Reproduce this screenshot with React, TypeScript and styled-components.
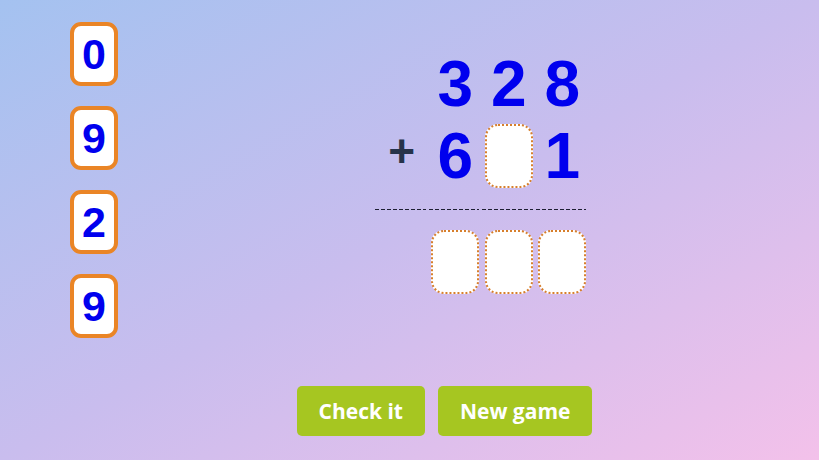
import { FC } from 'react';
import styled, { createGlobalStyle } from 'styled-components';

const GlobalStyle = createGlobalStyle`
	html, body {
		margin: 0;
		padding: 0;
	}
	body {
		font-family: 'Liberation Sans', Arial, sans-serif;
	}
`;

const tiles = ['0', '9', '2', '9'];
const topNumber = ['3', '2', '8'];

const App: FC = () => {
	return (
		<Page>
			<GlobalStyle />
			<Board>
				<TileColumn>
					{tiles.map((digit, i) => (
						<Tile key={i}>{digit}</Tile>
					))}
				</TileColumn>
				<Sum>
					<SumRow>
						<Cell />
						{topNumber.map((digit, i) => (
							<Cell key={i}>
								<Digit>{digit}</Digit>
							</Cell>
						))}
					</SumRow>
					<SumRow>
						<Cell>
							<Plus>+</Plus>
						</Cell>
						<Cell>
							<Digit>6</Digit>
						</Cell>
						<Cell>
							<Slot />
						</Cell>
						<Cell>
							<Digit>1</Digit>
						</Cell>
					</SumRow>
					<Divider>
						<Dash />
						<Dash />
						<Dash />
						<Dash />
					</Divider>
					<SumRow>
						<Cell />
						<Cell>
							<Slot />
						</Cell>
						<Cell>
							<Slot />
						</Cell>
						<Cell>
							<Slot />
						</Cell>
					</SumRow>
				</Sum>
			</Board>
			<ButtonRow>
				<Button>Check it</Button>
				<Button>New game</Button>
			</ButtonRow>
		</Page>
	);
};

const Page = styled.div`
	box-sizing: border-box;
	width: 100%;
	height: 460px;
	padding: 22px 0 0 70px;
	background: linear-gradient(to bottom right, #a4c2f0 0%, #c9bdee 50%, #f3c1ea 100%);
	overflow: hidden;
`;

const Board = styled.div`
	display: flex;
	align-items: flex-start;
`;

const TileColumn = styled.div`
	display: flex;
	flex-direction: column;
	gap: 20px;
`;

const Tile = styled.div`
	box-sizing: border-box;
	width: 48px;
	height: 64px;
	display: flex;
	align-items: center;
	justify-content: center;
	background: #ffffff;
	border: 4px solid #ea8526;
	border-radius: 11px;
	color: #0000ee;
	font-weight: 700;
	font-size: 43px;
	line-height: 1;
`;

const Sum = styled.div`
	display: flex;
	flex-direction: column;
	margin: 30px 0 0 257px;
`;

const SumRow = styled.div`
	display: flex;
	height: 64px;
	& + & {
		margin-top: 8px;
	}
`;

const Cell = styled.div`
	width: 53.5px;
	height: 64px;
	display: flex;
	align-items: center;
	justify-content: center;
`;

const Digit = styled.span`
	color: #0000ee;
	font-weight: 700;
	font-size: 64px;
	line-height: 64px;
`;

const Plus = styled.span`
	color: #26334a;
	font-weight: 700;
	font-size: 46px;
	line-height: 1;
	margin: 0 0 10px 0;
`;

const Slot = styled.div`
	box-sizing: border-box;
	width: 48px;
	height: 64px;
	background: #ffffff;
	border: 2px dotted #d77f2c;
	border-radius: 13px;
`;

const Divider = styled.div`
	display: flex;
	gap: 3px;
	margin: 21px 0 20px;
	height: 1px;
`;

const Dash = styled.div`
	width: 50.5px;
	height: 1px;
	background: repeating-linear-gradient(to right, #1e2033 0 4px, transparent 4px 6px);
`;

const ButtonRow = styled.div`
	display: flex;
	justify-content: center;
	gap: 13px;
	margin-top: 48px;
`;

const Button = styled.button`
	height: 50px;
	padding: 0 22px;
	border: none;
	border-radius: 5px;
	background: #a6c621;
	color: #ffffff;
	font-family: 'Open Sans', sans-serif;
	font-weight: 700;
	font-size: 21px;
	cursor: pointer;
`;

export default App;
